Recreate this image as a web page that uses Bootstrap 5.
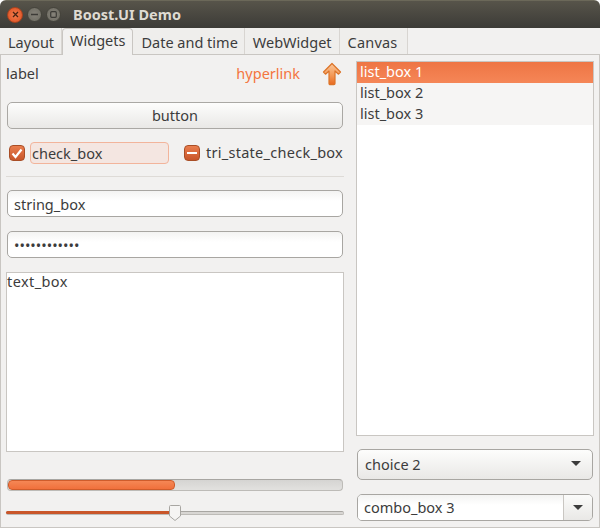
<!DOCTYPE html>
<html lang="en">
<head>
  <meta charset="UTF-8" />
  <title>Boost.UI Demo</title>
  <link href="https://cdn.jsdelivr.net/npm/bootstrap@5.3.0/dist/css/bootstrap.min.css" rel="stylesheet">
  <style>
    html, body { height: 100%; background: #fff; }
    body { font-family: "Noto Sans", "Open Sans", sans-serif; font-size: 14.5px; color: #3c3c3c; overflow: hidden; }
    .app-window { width: 600px; height: 528px; background: #f2f1f0; border-radius: 6px 6px 0 0; overflow: hidden; }
    .title-bar { height: 28px; padding-left: 7px; gap: 4px; background: linear-gradient(#57544a, #3c3b37); border-top: 1px solid #6b6859; }
    .win-btn { width: 15px; height: 15px; border-radius: 50%; border: 1px solid #45443c; background: radial-gradient(#86837a, #6c6a60); color: #3c3b37; }
    .win-close { width: 16px; height: 16px; border-color: #a8431f; background: radial-gradient(#f47e4e, #dc4c1e); }
    .win-title { margin-left: 8px; font-weight: 700; font-size: 14.5px; color: #dfdbd2; }
    .tab-row { height: 27px; margin-bottom: 0; border-bottom: 1px solid #c9c6c2; padding-left: 0; }
    .tab-row .nav-link { height: 26px; margin: 0; padding: 3px 6px 0 8px; border: 0; border-right: 1px solid #d8d5d1; border-radius: 0; color: #3c3c3c; background: #efeeec; line-height: 22px; }
    .tab-row .nav-link.active { height: 27px; margin-top: 0; padding: 0 7px 0 7px; border: 1px solid #c9c6c2; border-bottom: 0; border-radius: 4px 4px 0 0; background: #f2f1f0; color: #3c3c3c; }
    .tab-row .tab-first { width: 62px; }
    .tab-row .tab-web { padding-right: 7px; }
    .tab-row .tab-last { padding-right: 9px; letter-spacing: .2px; }
    .tab-page { height: 473px; padding: 6px; gap: 12px; border-left: 1px solid #c9c6c2; border-bottom: 1px solid #c9c6c2; border-right: 1px solid #c9c6c2; margin-right: 0; }
    .side-left { width: 338px; margin-left: -1px; }
    .side-right { width: 238px; }
    .top-line { height: 28px; margin-top: -1px; margin-bottom: 14px; padding-right: 2px; }
    .link-text { color: #f4763f; text-decoration: none; margin-right: 22px; }
    .gtk-btn { height: 27px; margin: 0 1px; padding: 0 0 2px; border: 1px solid #aaa8a4; border-radius: 5px; background: linear-gradient(#fdfdfc, #e9e8e6); color: #3c3c3c; font-size: 14.5px; line-height: 22px; }
    .check-line { height: 22px; margin-top: 13px; margin-bottom: 12px; padding-left: 3px; }
    .tick-box { width: 16px; height: 16px; flex: none; border: 1px solid #a94e26; border-radius: 4px; background: linear-gradient(#ea7e4e, #c8552a); }
    .focus-label { width: 139px; height: 22px; margin-left: 5px; padding-left: 1px; line-height: 20px; border: 1px solid #f2b49b; border-radius: 4px; background: #f4e6e1; }
    .tri-box { margin-left: 15px; }
    .tri-label { margin-left: 6px; letter-spacing: .27px; }
    .rule-line { margin: 0 0 13px; border-top: 1px solid #dedbd7; opacity: 1; }
    .entry-box { height: 27px; width: 336px; margin: 0 1px 14px; padding: 0 6px; border: 1px solid #a8a6a2; border-radius: 5px; background: linear-gradient(#f3f3f2, #fff 40%); color: #3c3c3c; font-size: 14.5px; line-height: 24px; box-shadow: none; }
    .text-area { height: 180px; width: 338px; padding: 0; border: 1px solid #c9c6c2; border-radius: 0; color: #3c3c3c; font-size: 14.5px; letter-spacing: .4px; line-height: 16px; resize: none; box-shadow: none; }
    .bar-track { height: 12px; margin: 27px 1px 0; border: 1px solid #bdbbb7; border-top-color: #a8a6a2; border-radius: 4px; background: linear-gradient(#d5d4d2, #e2e1df); }
    .bar-fill { background: linear-gradient(#f58755, #f0703c); border: 1px solid #cf5c2b; border-radius: 4px; }
    .slide-line { height: 16px; margin-top: 14px; }
    .slide-track { height: 4px; width: 100%; border-radius: 2px; background: #d8d6d3; border: 1px solid #bdbbb7; border-top-color: #a8a6a2; }
    .slide-done { height: 3px; left: 0; top: 6px; background: #c9562a; border-radius: 2px; }
    .slide-thumb { left: 163px; top: 0; width: 12px; height: 16px; }
    .items-box { height: 376px; width: 238px; border: 1px solid #c9c6c2; background: #fff; border-radius: 0; }
    .items-box .list-group-item { height: 21px; padding: 0 3px; border: 0; border-radius: 0; background: #f6f5f4; color: #3c3c3c; line-height: 19px; }
    .items-box .list-group-item.active { background: linear-gradient(#ee7544, #f58657); color: #fff; }
    .pick-btn { height: 31px; margin: 13px 1px 0; padding: 0 7px 2px; width: 236px; border-color: #a8a6a2; }
    .pick-arrow { width: 0; height: 0; border-left: 5px solid transparent; border-right: 5px solid transparent; border-top: 5px solid #3c3c3c; }
    .combo-line { height: 27px; width: 236px; margin: 14px 1px 0; border: 1px solid #a8a6a2; border-radius: 5px; overflow: hidden; }
    .combo-text { padding-left: 6px; background: linear-gradient(#f3f3f2, #fff 40%); line-height: 25px; border-right: 1px solid #c9c6c2; }
    .combo-drop { width: 28px; background: linear-gradient(#fbfbfa, #e9e8e6); }
  </style>
</head>
<body>
  <div class="app-window d-flex flex-column">
    <div class="title-bar d-flex align-items-center">
      <span class="win-btn win-close d-flex align-items-center justify-content-center">
        <svg width="7" height="7" viewBox="0 0 7 7"><path d="M1 1l5 5M6 1l-5 5" stroke="#4a2312" stroke-width="1.3"/></svg>
      </span>
      <span class="win-btn d-flex align-items-center justify-content-center">
        <svg width="7" height="7" viewBox="0 0 7 7"><path d="M0 3.5h7" stroke="#3c3b37" stroke-width="1.5"/></svg>
      </span>
      <span class="win-btn d-flex align-items-center justify-content-center">
        <svg width="7" height="7" viewBox="0 0 7 7"><rect x=".7" y=".7" width="5.6" height="5.6" rx="1" fill="none" stroke="#3c3b37" stroke-width="1.2"/></svg>
      </span>
      <span class="win-title">Boost.UI Demo</span>
    </div>

    <ul class="nav nav-tabs tab-row">
      <li class="nav-item"><a class="nav-link tab-first" href="#">Layout</a></li>
      <li class="nav-item"><a class="nav-link active" href="#">Widgets</a></li>
      <li class="nav-item"><a class="nav-link" href="#">Date and time</a></li>
      <li class="nav-item"><a class="nav-link tab-web" href="#">WebWidget</a></li>
      <li class="nav-item"><a class="nav-link tab-last" href="#">Canvas</a></li>
    </ul>

    <div class="tab-page d-flex">
      <div class="side-left d-flex flex-column">
        <div class="top-line d-flex align-items-center">
          <span>label</span>
          <a class="link-text ms-auto" href="#">hyperlink</a>
          <svg width="20" height="24" viewBox="0 0 20 24">
            <defs><linearGradient id="arrowFill" x1="0" y1="0" x2="0" y2="1"><stop offset="0" stop-color="#fbc79a"/><stop offset=".55" stop-color="#f39a58"/><stop offset="1" stop-color="#e8691f"/></linearGradient></defs>
            <path d="M10 1.500L18.500 10 16.500 12.200 13 9V21.500a1.200 1.200 0 0 1-1.200 1.200H8.200A1.200 1.200 0 0 1 7 21.500V9L3.500 12.200 1.500 10Z" fill="url(#arrowFill)" stroke="#dc7429" stroke-width="1.200" stroke-linejoin="round"/>
          </svg>
        </div>
        <button class="btn gtk-btn" type="button">button</button>
        <div class="check-line d-flex align-items-center">
          <span class="tick-box d-flex align-items-center justify-content-center">
            <svg width="12" height="11" viewBox="0 0 12 11"><path d="M1.500 5.500L4.500 9 10.500 1.500" fill="none" stroke="#fff" stroke-width="2.200"/></svg>
          </span>
          <span class="focus-label">check_box</span>
          <span class="tick-box tri-box d-flex align-items-center justify-content-center">
            <svg width="10" height="4" viewBox="0 0 10 4"><path d="M0 2h10" stroke="#fff" stroke-width="2"/></svg>
          </span>
          <span class="tri-label">tri_state_check_box</span>
        </div>
        <hr class="rule-line">
        <input class="form-control entry-box" type="text" value="string_box">
        <input class="form-control entry-box" type="password" value="password1234">
        <textarea class="form-control text-area">text_box</textarea>
        <div class="progress bar-track">
          <div class="progress-bar bar-fill" style="width: 50%"></div>
        </div>
        <div class="slide-line position-relative d-flex align-items-center">
          <div class="slide-track"></div>
          <div class="slide-done position-absolute w-50"></div>
          <svg class="slide-thumb position-absolute" viewBox="0 0 12 16">
            <path d="M1.500.5h9a1 1 0 0 1 1 1V11L6 15.500.5 11V1.500a1 1 0 0 1 1-1Z" fill="#f5f4f3" stroke="#a8a6a2"/>
          </svg>
        </div>
      </div>

      <div class="side-right d-flex flex-column">
        <ul class="list-group items-box">
          <li class="list-group-item active">list_box 1</li>
          <li class="list-group-item">list_box 2</li>
          <li class="list-group-item">list_box 3</li>
        </ul>
        <button class="btn gtk-btn pick-btn d-flex align-items-center justify-content-between" type="button">
          <span>choice 2</span><span class="pick-arrow me-1"></span>
        </button>
        <div class="combo-line d-flex">
          <div class="combo-text flex-grow-1">combo_box 3</div>
          <div class="combo-drop d-flex align-items-center justify-content-center"><span class="pick-arrow"></span></div>
        </div>
      </div>
    </div>
  </div>
  <script src="https://cdn.jsdelivr.net/npm/bootstrap@5.3.0/dist/js/bootstrap.bundle.min.js"></script>
</body>
</html>
